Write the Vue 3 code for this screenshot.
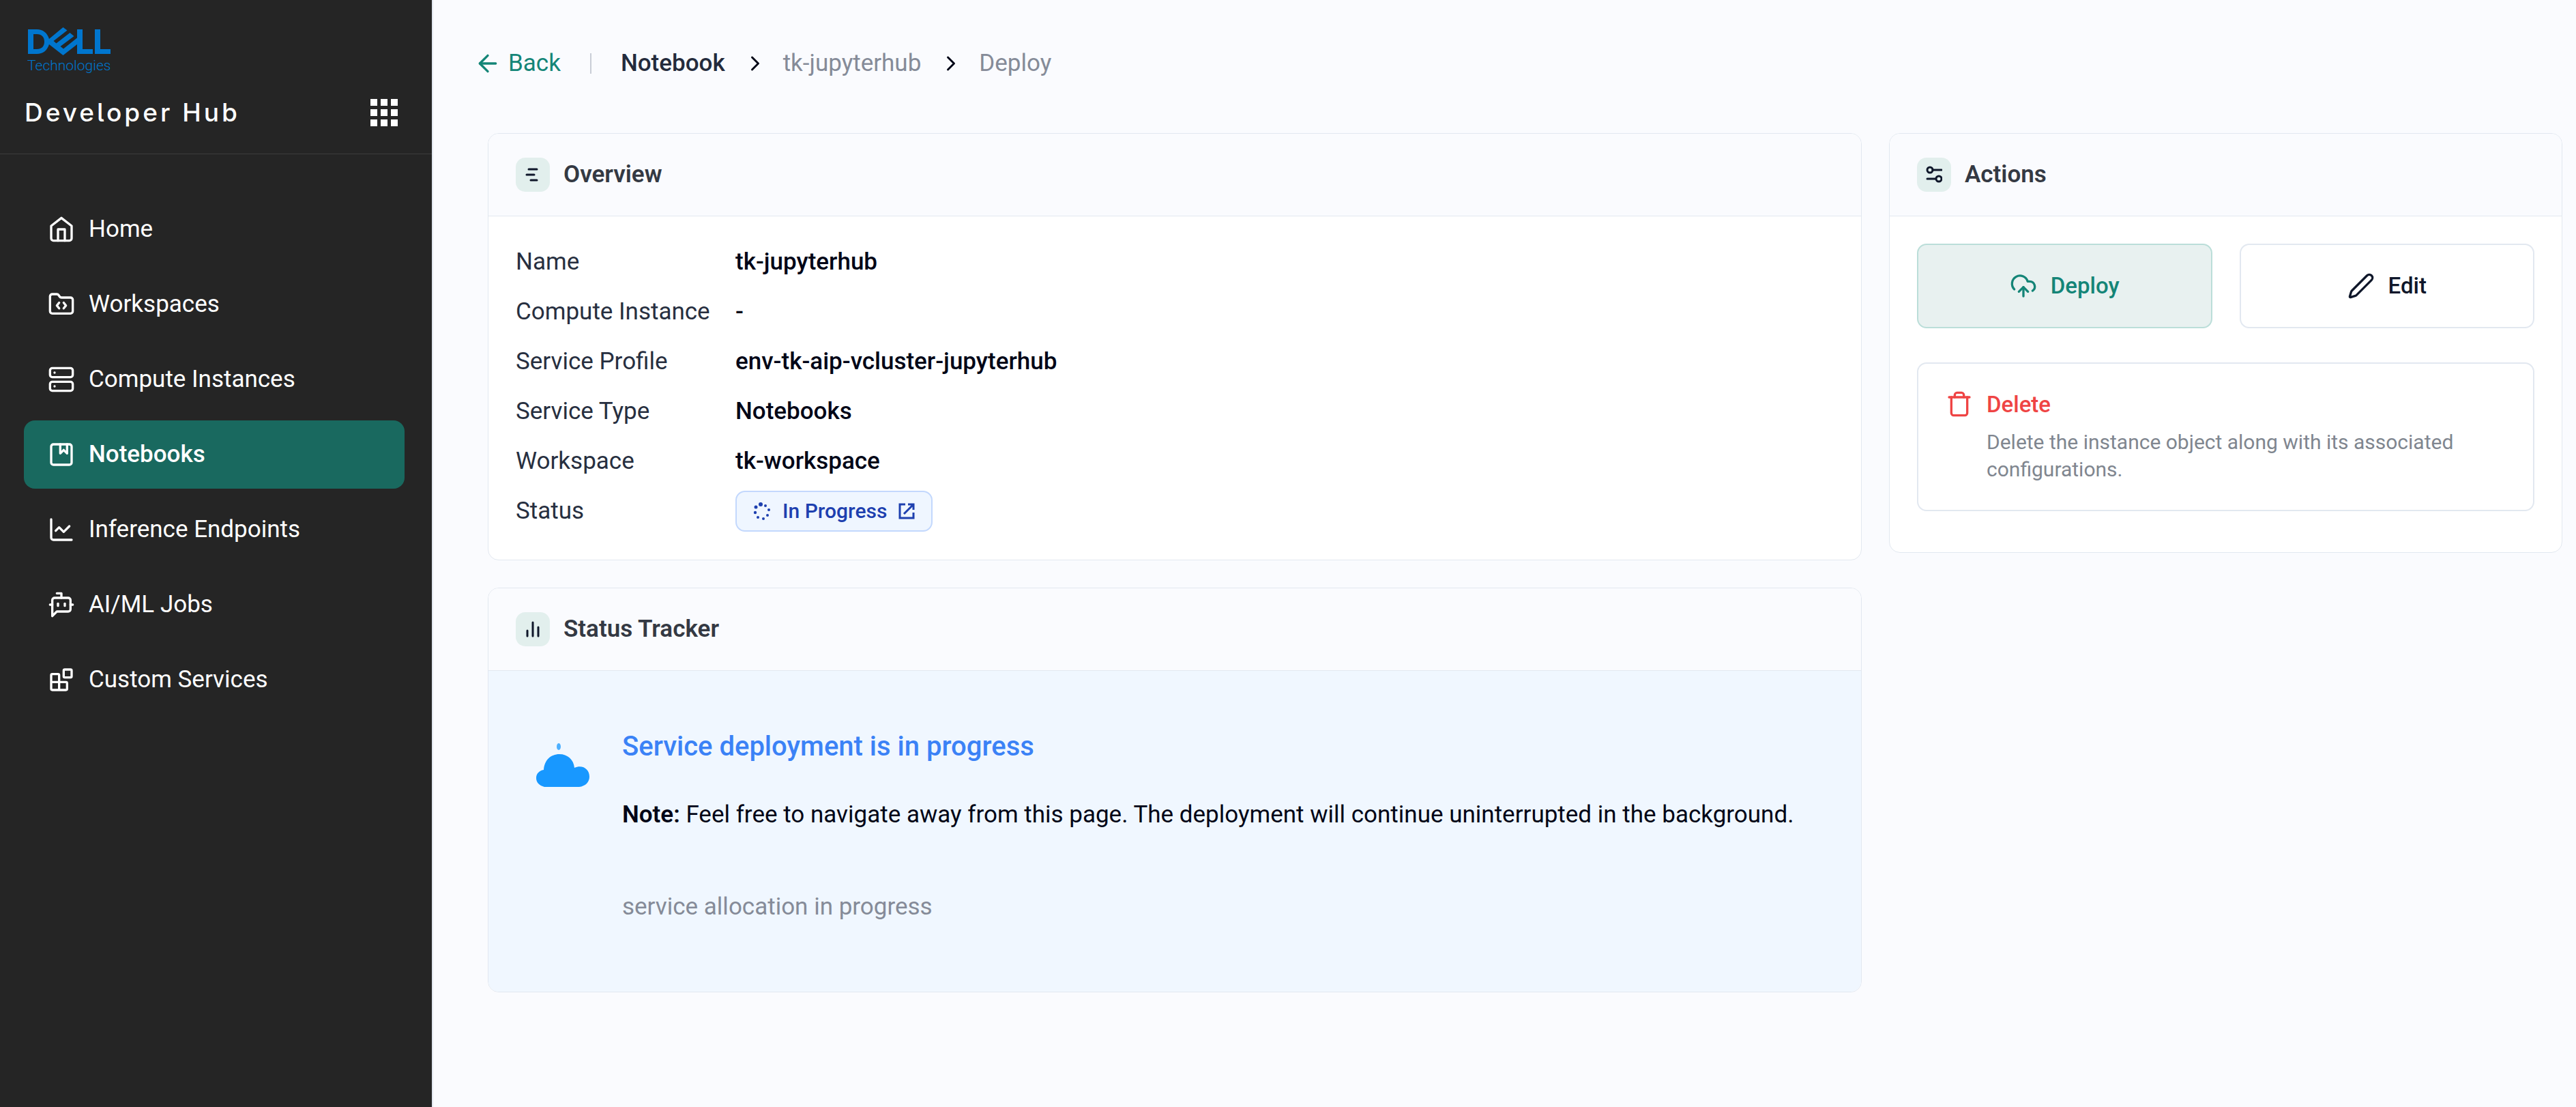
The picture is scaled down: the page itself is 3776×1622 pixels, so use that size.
<script setup>
const navItems = [
  { label: 'Home', paths: ['m3 9 9-7 9 7v11a2 2 0 0 1-2 2H5a2 2 0 0 1-2-2z', 'M9 22V12h6v10'] },
  {
    label: 'Workspaces',
    paths: [
      'M10 10.5 8 13l2 2.5',
      'm14 10.5 2 2.5-2 2.5',
      'M20 20a2 2 0 0 0 2-2V8a2 2 0 0 0-2-2h-7.9a2 2 0 0 1-1.69-.9L9.6 3.9A2 2 0 0 0 7.93 3H4a2 2 0 0 0-2 2v13a2 2 0 0 0 2 2z',
    ],
  },
  {
    label: 'Compute Instances',
    paths: [
      'M4 2h16a2 2 0 0 1 2 2v4a2 2 0 0 1-2 2H4a2 2 0 0 1-2-2V4a2 2 0 0 1 2-2z',
      'M4 14h16a2 2 0 0 1 2 2v4a2 2 0 0 1-2 2H4a2 2 0 0 1-2-2v-4a2 2 0 0 1 2-2z',
      'M6 6h.01',
      'M6 18h.01',
    ],
  },
  {
    label: 'Notebooks',
    active: true,
    paths: ['M5 3h14a2 2 0 0 1 2 2v14a2 2 0 0 1-2 2H5a2 2 0 0 1-2-2V5a2 2 0 0 1 2-2z', 'M11 3v8l3-3 3 3V3'],
  },
  { label: 'Inference Endpoints', paths: ['M3 3v16a2 2 0 0 0 2 2h16', 'm19 9-5 5-4-4-3 3'] },
  {
    label: 'AI/ML Jobs',
    paths: [
      'M12 6V2H8',
      'm8 18-4 4V8a2 2 0 0 1 2-2h12a2 2 0 0 1 2 2v8a2 2 0 0 1-2 2Z',
      'M2 12h2',
      'M9 11v2',
      'M15 11v2',
      'M20 12h2',
    ],
  },
  {
    label: 'Custom Services',
    paths: [
      'M15 3h5a1 1 0 0 1 1 1v5a1 1 0 0 1-1 1h-5a1 1 0 0 1-1-1V4a1 1 0 0 1 1-1z',
      'M10 21V8a1 1 0 0 0-1-1H4a1 1 0 0 0-1 1v12a1 1 0 0 0 1 1h12a1 1 0 0 0 1-1v-5a1 1 0 0 0-1-1H3',
    ],
  },
]

const details = [
  { label: 'Name', value: 'tk-jupyterhub' },
  { label: 'Compute Instance', value: '-' },
  { label: 'Service Profile', value: 'env-tk-aip-vcluster-jupyterhub' },
  { label: 'Service Type', value: 'Notebooks' },
  { label: 'Workspace', value: 'tk-workspace' },
]

const spinnerDots = [
  { x: 11, y: 3, r: 3 },
  { x: 4, y: 7, r: 2.5 },
  { x: 3, y: 15, r: 2.2 },
  { x: 7, y: 22, r: 2 },
  { x: 15, y: 24, r: 2 },
  { x: 21, y: 19, r: 2 },
  { x: 23, y: 11, r: 2 },
  { x: 18, y: 5, r: 2 },
]
</script>

<template>
  <div class="app">
    <aside class="sidebar">
      <header class="brand">
        <div class="logo">
          <svg width="122" height="41" viewBox="0 -1 122 41" role="img" aria-label="Dell">
            <g fill="#0076ce">
              <path fill-rule="evenodd" d="M1 2H14C23 2 29 7 32 16L52.5 -1L58.5 3.5L38.5 19L42.5 22.5L62.5 7L68.5 12L48.5 27L53 30.5L73 14.5V2H81V31H96V38H73V24L52.5 40L32 24C29 33 23 38 14 38H1ZM9 9V31H14C21 31 25 27 25 20C25 13 21 9 14 9Z" />
              <path d="M99 2H107V31H122V38H99Z" />
            </g>
          </svg>
          <span class="logo-text">Technologies</span>
        </div>
        <div class="brand-row">
          <span class="brand-name">Developer Hub</span>
          <button class="grid-button" type="button" aria-label="Applications">
            <i v-for="n in 9" :key="n"></i>
          </button>
        </div>
      </header>
      <nav class="nav">
        <a v-for="item in navItems" :key="item.label" href="#" class="nav-item" :class="{ active: item.active }">
          <svg class="icon" viewBox="0 0 24 24"><path v-for="d in item.paths" :key="d" :d="d" /></svg>
          <span>{{ item.label }}</span>
        </a>
      </nav>
    </aside>

    <main class="main">
      <div class="crumbs">
        <a href="#" class="back">
          <svg class="icon" viewBox="0 0 24 24"><path d="m12 19-7-7 7-7" /><path d="M19 12H5" /></svg>
          <span>Back</span>
        </a>
        <span class="separator"></span>
        <a href="#" class="current">Notebook</a>
        <svg class="icon chevron" viewBox="0 0 24 24"><path d="m9 18 6-6-6-6" /></svg>
        <a href="#">tk-jupyterhub</a>
        <svg class="icon chevron" viewBox="0 0 24 24"><path d="m9 18 6-6-6-6" /></svg>
        <span>Deploy</span>
      </div>

      <div class="columns">
        <div class="primary">
          <section class="card">
            <header class="card-head">
              <span class="badge">
                <svg width="22" height="22" viewBox="0 0 22 22"><path d="M5 3H17M2 11H13M8 19H17" /></svg>
              </span>
              <h2>Overview</h2>
            </header>
            <dl class="details">
              <template v-for="row in details" :key="row.label">
                <dt>{{ row.label }}</dt>
                <dd>{{ row.value }}</dd>
              </template>
              <dt>Status</dt>
              <dd>
                <button type="button" class="chip">
                  <svg width="26" height="26" viewBox="0 0 26 26" fill="currentColor">
                    <circle v-for="dot in spinnerDots" :key="dot.x" :cx="dot.x" :cy="dot.y" :r="dot.r" />
                  </svg>
                  <span>In Progress</span>
                  <svg width="24" height="24" viewBox="0 0 24 24" class="external">
                    <path d="M10 2H2V22H22V14M14 2H22V10M22 2L8 16" />
                  </svg>
                </button>
              </dd>
            </dl>
          </section>

          <section class="card">
            <header class="card-head">
              <span class="badge">
                <svg width="22" height="24" viewBox="0 0 22 24"><path d="M3 14V22M11 2V22M19 9V22" /></svg>
              </span>
              <h2>Status Tracker</h2>
            </header>
            <div class="tracker">
              <svg class="cloud" width="78" height="66" viewBox="0 0 78 66">
                <ellipse cx="33" cy="5" rx="3" ry="5" fill="#4db0ff" />
                <path fill="#1898ff" d="M12 64C4 62 0 57 0 51C0 45 4 40 11 39C12 25 21 16 34 16C46 16 55 24 56 36C68 31 78 38 78 49C78 57 72 63 63 64Z" />
              </svg>
              <div>
                <h3>Service deployment is in progress</h3>
                <p class="note"><strong>Note:</strong> Feel free to navigate away from this page. The deployment will continue uninterrupted in the background.</p>
                <p class="progress">service allocation in progress</p>
              </div>
            </div>
          </section>
        </div>

        <section class="card">
          <header class="card-head">
            <span class="badge">
              <svg width="24" height="28" viewBox="0 0 24 28">
                <circle cx="6" cy="7" r="4" /><path d="M10 7H23M2 20H14" /><circle cx="19" cy="20" r="4" />
              </svg>
            </span>
            <h2>Actions</h2>
          </header>
          <div class="actions-body">
            <div class="action-row">
              <button type="button" class="action deploy">
                <svg class="icon" viewBox="0 0 24 24">
                  <path d="M12 13v8" />
                  <path d="M4 14.899A7 7 0 1 1 15.71 8h1.79a4.5 4.5 0 0 1 2.5 8.242" />
                  <path d="m8 17 4-4 4 4" />
                </svg>
                Deploy
              </button>
              <button type="button" class="action">
                <svg class="icon" viewBox="0 0 24 24">
                  <path d="M21.174 6.812a1 1 0 0 0-3.986-3.987L3.842 16.174a2 2 0 0 0-.5.83l-1.321 4.352a.5.5 0 0 0 .623.622l4.353-1.32a2 2 0 0 0 .83-.497z" />
                </svg>
                Edit
              </button>
            </div>
            <button type="button" class="delete">
              <svg class="icon" viewBox="0 0 24 24">
                <path d="M3 6h18" />
                <path d="M19 6v14c0 1-1 2-2 2H7c-1 0-2-1-2-2V6" />
                <path d="M8 6V4c0-1 1-2 2-2h4c1 0 2 1 2 2v2" />
              </svg>
              <span class="delete-text">
                <span class="delete-title">Delete</span>
                <span class="delete-desc">Delete the instance object along with its associated configurations.</span>
              </span>
            </button>
          </div>
        </section>
      </div>
    </main>
  </div>
</template>

<style>
body {
  margin: 0;
  background: #fafbfe;
}
</style>

<style scoped>
.app {
  display: flex;
  min-height: 100vh;
  box-sizing: border-box;
  font-family: Roboto, "Liberation Sans", sans-serif;
  font-size: 35px;
  line-height: 42px;
  color: #020617;
}
.app * { box-sizing: border-box; }
a { color: inherit; text-decoration: none; }
button { font: inherit; color: inherit; margin: 0; cursor: pointer; }
h2, h3, p, dl, dd { margin: 0; }
svg { display: block; flex: none; }
.icon {
  width: 40px;
  height: 40px;
  fill: none;
  stroke: currentColor;
  stroke-width: 2;
  stroke-linecap: round;
  stroke-linejoin: round;
}

.sidebar {
  flex: none;
  width: 635px;
  background: #252525;
  border-right: 2px solid #e2e8f0;
  color: #fff;
}
.brand {
  height: 226px;
  padding: 40px 50px 0 36px;
  border-bottom: 1px solid #3d3d3d;
}
.logo { padding-left: 4px; color: #0076ce; }
.logo-text {
  display: block;
  font-size: 21px;
  font-weight: 300;
  line-height: 30px;
}
.brand-row {
  display: flex;
  align-items: center;
  justify-content: space-between;
  margin-top: 32px;
}
.brand-name {
  font-family: Inter, "Noto Sans", sans-serif;
  font-size: 37px;
  font-weight: 500;
  font-feature-settings: "cv05";
  line-height: 44px;
  letter-spacing: 4px;
}
.grid-button {
  display: grid;
  grid-template-columns: repeat(3, 10px);
  gap: 5px;
  padding: 0;
  border: 0;
  background: none;
}
.grid-button i { height: 10px; background: #fff; }
.nav {
  display: flex;
  flex-direction: column;
  gap: 10px;
  padding: 60px 40px 0 35px;
}
.nav-item {
  display: flex;
  align-items: center;
  gap: 20px;
  height: 100px;
  padding: 0 35px;
  border-radius: 16px;
}
.nav-item.active { background: #19695f; font-weight: 500; }

.main { flex: 1; min-width: 0; padding: 72px 20px 60px 60px; }
.crumbs { display: flex; align-items: center; height: 42px; color: #858b98; }
.back { display: flex; align-items: center; gap: 10px; color: #148577; }
.separator { width: 2px; height: 30px; margin: 0 43px; background: #c9cdd6; }
.current { color: #242b3c; font-weight: 500; }
.chevron { width: 36px; height: 36px; margin: 0 23px 0 26px; color: #020617; }

.columns {
  display: grid;
  grid-template-columns: repeat(3, minmax(0, 1fr));
  align-items: start;
  gap: 40px;
  margin: 81px 0 0 20px;
}
.primary { grid-column: span 2; display: flex; flex-direction: column; gap: 40px; }
.card {
  overflow: hidden;
  background: #fff;
  border: 1px solid #e2e8f0;
  border-radius: 16px;
}
.card-head {
  display: flex;
  align-items: center;
  gap: 20px;
  height: 121px;
  padding: 0 40px;
  background: #fafbfe;
  border-bottom: 1px solid #e2e8f0;
}
.badge {
  display: flex;
  align-items: center;
  justify-content: center;
  width: 50px;
  height: 50px;
  border-radius: 14px;
  background: #e2efed;
}
.badge svg { fill: none; stroke: #0f172a; stroke-width: 3; stroke-linecap: round; }
h2 { font-size: 35px; font-weight: 600; line-height: 42px; color: #343943; }

.details {
  display: grid;
  grid-template-columns: 322px 1fr;
  grid-auto-rows: 60px;
  align-items: center;
  row-gap: 13px;
  padding: 37px 40px 41px;
}
dt { color: #272f40; }
dd { font-weight: 500; }
.chip {
  display: flex;
  align-items: center;
  gap: 17px;
  height: 60px;
  padding: 0 24px;
  border: 2px solid #c3d8fd;
  border-radius: 14px;
  background: #eff6ff;
  color: #1e40af;
  font-size: 30px;
}
.external { fill: none; stroke: currentColor; stroke-width: 3; }

.tracker {
  display: flex;
  gap: 48px;
  padding: 86px 70px 103px;
  background: #f0f7ff;
}
.cloud { margin-top: 20px; }
h3 { font-size: 40px; font-weight: 500; line-height: 50px; color: #3b82f6; }
.note { margin-top: 54px; }
.note strong { font-weight: 600; }
.progress { margin-top: 93px; color: #858b98; }

.actions-body { padding: 40px 40px 60px; }
.action-row { display: grid; grid-template-columns: 1fr 1fr; gap: 40px; }
.action {
  display: flex;
  align-items: center;
  justify-content: center;
  gap: 20px;
  height: 124px;
  border: 2px solid #e2e8f0;
  border-radius: 14px;
  background: #fff;
  color: #0f172a;
  font-size: 33px;
  font-weight: 500;
}
.deploy { border-color: #bbded9; background: #e8f1f0; color: #148577; }
.delete {
  display: flex;
  align-items: flex-start;
  gap: 20px;
  width: 100%;
  margin-top: 50px;
  padding: 39px 40px;
  border: 2px solid #e2e8f0;
  border-radius: 14px;
  background: #fff;
  color: #ef4444;
  text-align: left;
}
.delete-text { display: flex; flex-direction: column; gap: 14px; }
.delete-title { font-size: 33px; font-weight: 500; }
.delete-desc { font-size: 30px; line-height: 40px; color: #80868f; }
</style>
